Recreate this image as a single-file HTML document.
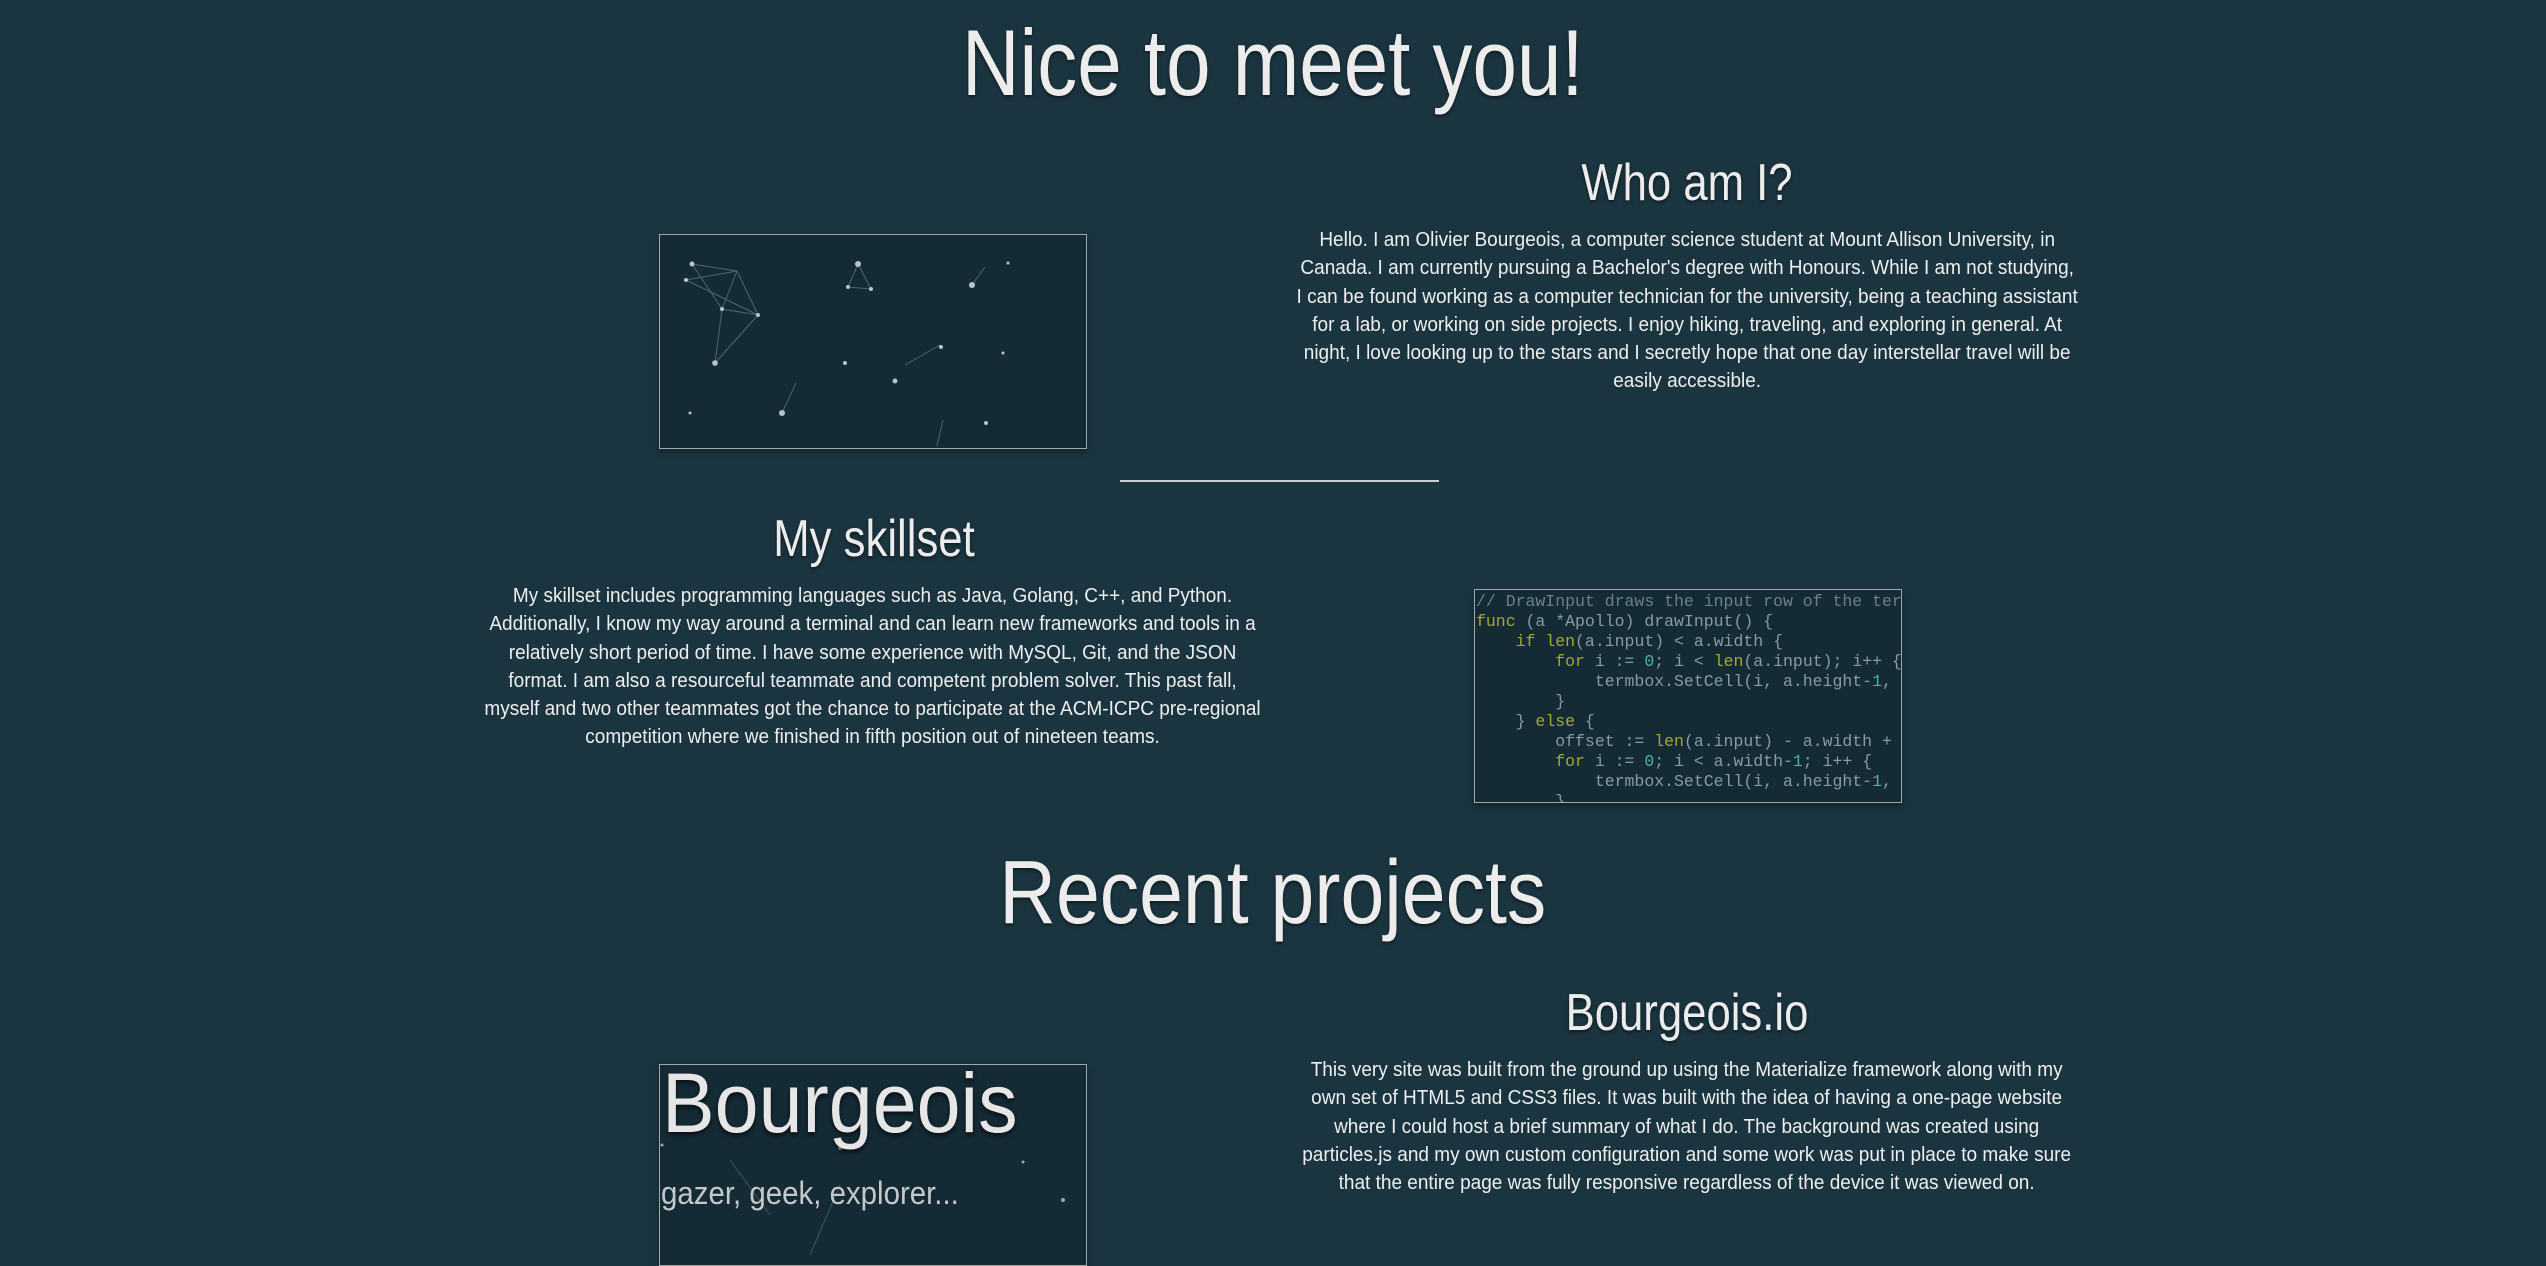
<!DOCTYPE html>
<html><head><meta charset="utf-8"><style>
html,body{margin:0;padding:0;}
body{width:2546px;height:1216px;overflow:hidden;background:#1b3540;position:relative;font-family:"Liberation Sans",sans-serif;color:#ececec;}
.h{position:absolute;left:0;width:2546px;text-align:center;white-space:nowrap;text-shadow:0 2px 4px rgba(0,0,0,.5);}
.h span{display:inline-block;transform:scaleX(.85);}
.p{position:absolute;text-align:center;white-space:nowrap;font-size:20px;line-height:28.3px;color:#eee;}
.p span{display:inline-block;transform:scaleX(.95);transform-origin:center;}
.box{position:absolute;background:#142a35;border:1px solid #a0a8aa;box-shadow:0 3px 6px rgba(0,0,0,.35);overflow:hidden;}
.code{font-family:"Liberation Mono",monospace;font-size:16.5px;line-height:20px;color:#8a9aa0;white-space:pre;padding:2px 0 0 1px;}
.k{color:#a4a832}.n{color:#4fb0a8}.c{color:#6e7f86}
</style></head><body>

<div class="h" style="top:8px;font-size:94px;line-height:110px;"><span>Nice to meet you!</span></div>

<div class="box" style="left:659px;top:234px;width:426px;height:213px;">
<svg width="426" height="213" viewBox="0 0 426 213">
<g stroke="#5d7680" stroke-width="1" fill="none" opacity=".8">
<line x1="32" y1="29" x2="77" y2="36"/><line x1="26" y1="45" x2="77" y2="36"/><line x1="32" y1="29" x2="62" y2="74"/><line x1="77" y1="36" x2="62" y2="74"/><line x1="62" y1="74" x2="98" y2="80"/><line x1="26" y1="45" x2="98" y2="80"/><line x1="62" y1="74" x2="55" y2="128"/><line x1="77" y1="36" x2="98" y2="80"/><line x1="98" y1="80" x2="55" y2="128"/>
<line x1="198" y1="29" x2="188" y2="52"/><line x1="198" y1="29" x2="211" y2="54"/><line x1="188" y1="52" x2="211" y2="54"/>
<line x1="312" y1="50" x2="325" y2="32"/><line x1="245" y1="130" x2="280" y2="110"/><line x1="122" y1="178" x2="136" y2="148"/><line x1="277" y1="211" x2="283" y2="185"/>
</g>
<g fill="#b8c4c8">
<circle cx="32" cy="29" r="2.5"/><circle cx="26" cy="45" r="2"/><circle cx="62" cy="74" r="2"/><circle cx="98" cy="80" r="2"/><circle cx="55" cy="128" r="2.8"/><circle cx="198" cy="29" r="3"/><circle cx="188" cy="52" r="2"/><circle cx="211" cy="54" r="2"/><circle cx="312" cy="50" r="3"/><circle cx="348" cy="28" r="1.5"/><circle cx="185" cy="128" r="2"/><circle cx="235" cy="146" r="2.5"/><circle cx="281" cy="112" r="2"/><circle cx="122" cy="178" r="3"/><circle cx="30" cy="178" r="1.5"/><circle cx="326" cy="188" r="2"/><circle cx="343" cy="118" r="1.5"/>
</g></svg></div>

<div class="h" style="left:1687px;width:0;top:150px;font-size:52px;line-height:66px;"><span style="transform:translateX(-50%) scaleX(.84);position:absolute;left:0;">Who am I?</span></div>

<div class="p" style="left:1187px;width:1000px;top:226px;"><span>Hello. I am Olivier Bourgeois, a computer science student at Mount Allison University, in<br>Canada. I am currently pursuing a Bachelor's degree with Honours. While I am not studying,<br>I can be found working as a computer technician for the university, being a teaching assistant<br>for a lab, or working on side projects. I enjoy hiking, traveling, and exploring in general. At<br>night, I love looking up to the stars and I secretly hope that one day interstellar travel will be<br>easily accessible.</span></div>

<div style="position:absolute;left:1120px;top:480px;width:319px;height:2px;background:#c8cfd2;"></div>

<div class="h" style="left:874px;width:0;top:506px;font-size:52px;line-height:66px;"><span style="transform:translateX(-50%) scaleX(.84);position:absolute;left:0;">My skillset</span></div>

<div class="p" style="left:373px;width:1000px;top:582px;"><span>My skillset includes programming languages such as Java, Golang, C++, and Python.<br>Additionally, I know my way around a terminal and can learn new frameworks and tools in a<br>relatively short period of time. I have some experience with MySQL, Git, and the JSON<br>format. I am also a resourceful teammate and competent problem solver. This past fall,<br>myself and two other teammates got the chance to participate at the ACM-ICPC pre-regional<br>competition where we finished in fifth position out of nineteen teams.</span></div>

<div class="box" style="left:1474px;top:589px;width:426px;height:212px;"><div class="code"><span class="c">// DrawInput draws the input row of the ter</span>
<span class="k">func</span> (a *Apollo) drawInput() {
    <span class="k">if len</span>(a.input) &lt; a.width {
        <span class="k">for</span> i := <span class="n">0</span>; i &lt; <span class="k">len</span>(a.input); i++ {
            termbox.SetCell(i, a.height-<span class="n">1</span>,
        }
    } <span class="k">else</span> {
        offset := <span class="k">len</span>(a.input) - a.width +
        <span class="k">for</span> i := <span class="n">0</span>; i &lt; a.width-<span class="n">1</span>; i++ {
            termbox.SetCell(i, a.height-<span class="n">1</span>,
        }</div></div>

<div class="h" style="top:838px;font-size:90px;line-height:110px;"><span style="transform:scaleX(.875)">Recent projects</span></div>

<div class="h" style="left:1687px;width:0;top:980px;font-size:52px;line-height:66px;"><span style="transform:translateX(-50%) scaleX(.84);position:absolute;left:0;">Bourgeois.io</span></div>

<div class="p" style="left:1187px;width:1000px;top:1056px;"><span>This very site was built from the ground up using the Materialize framework along with my<br>own set of HTML5 and CSS3 files. It was built with the idea of having a one-page website<br>where I could host a brief summary of what I do. The background was created using<br>particles.js and my own custom configuration and some work was put in place to make sure<br>that the entire page was fully responsive regardless of the device it was viewed on.</span></div>

<div class="box" style="left:659px;top:1064px;width:426px;height:200px;">
<svg width="426" height="200" style="position:absolute;left:0;top:0"><g stroke="#4d6670" fill="none" opacity=".7"><line x1="70" y1="95" x2="110" y2="150"/><line x1="180" y1="120" x2="150" y2="190"/></g><g fill="#9aa8ad"><circle cx="180" cy="83" r="2"/><circle cx="363" cy="97" r="1.5"/><circle cx="2" cy="80" r="1.5"/><circle cx="403" cy="135" r="2"/></g></svg>
<div style="position:absolute;left:2px;top:-12px;font-size:84px;line-height:100px;color:#e6e6e6;text-shadow:0 3px 5px rgba(0,0,0,.6);white-space:nowrap;transform:scaleX(.94);transform-origin:left;">Bourgeois</div>
<div style="position:absolute;left:1px;top:108px;font-size:32px;line-height:40px;color:#c4c8ca;white-space:nowrap;transform:scaleX(.92);transform-origin:left;">gazer, geek, explorer...</div>
</div>

</body></html>
